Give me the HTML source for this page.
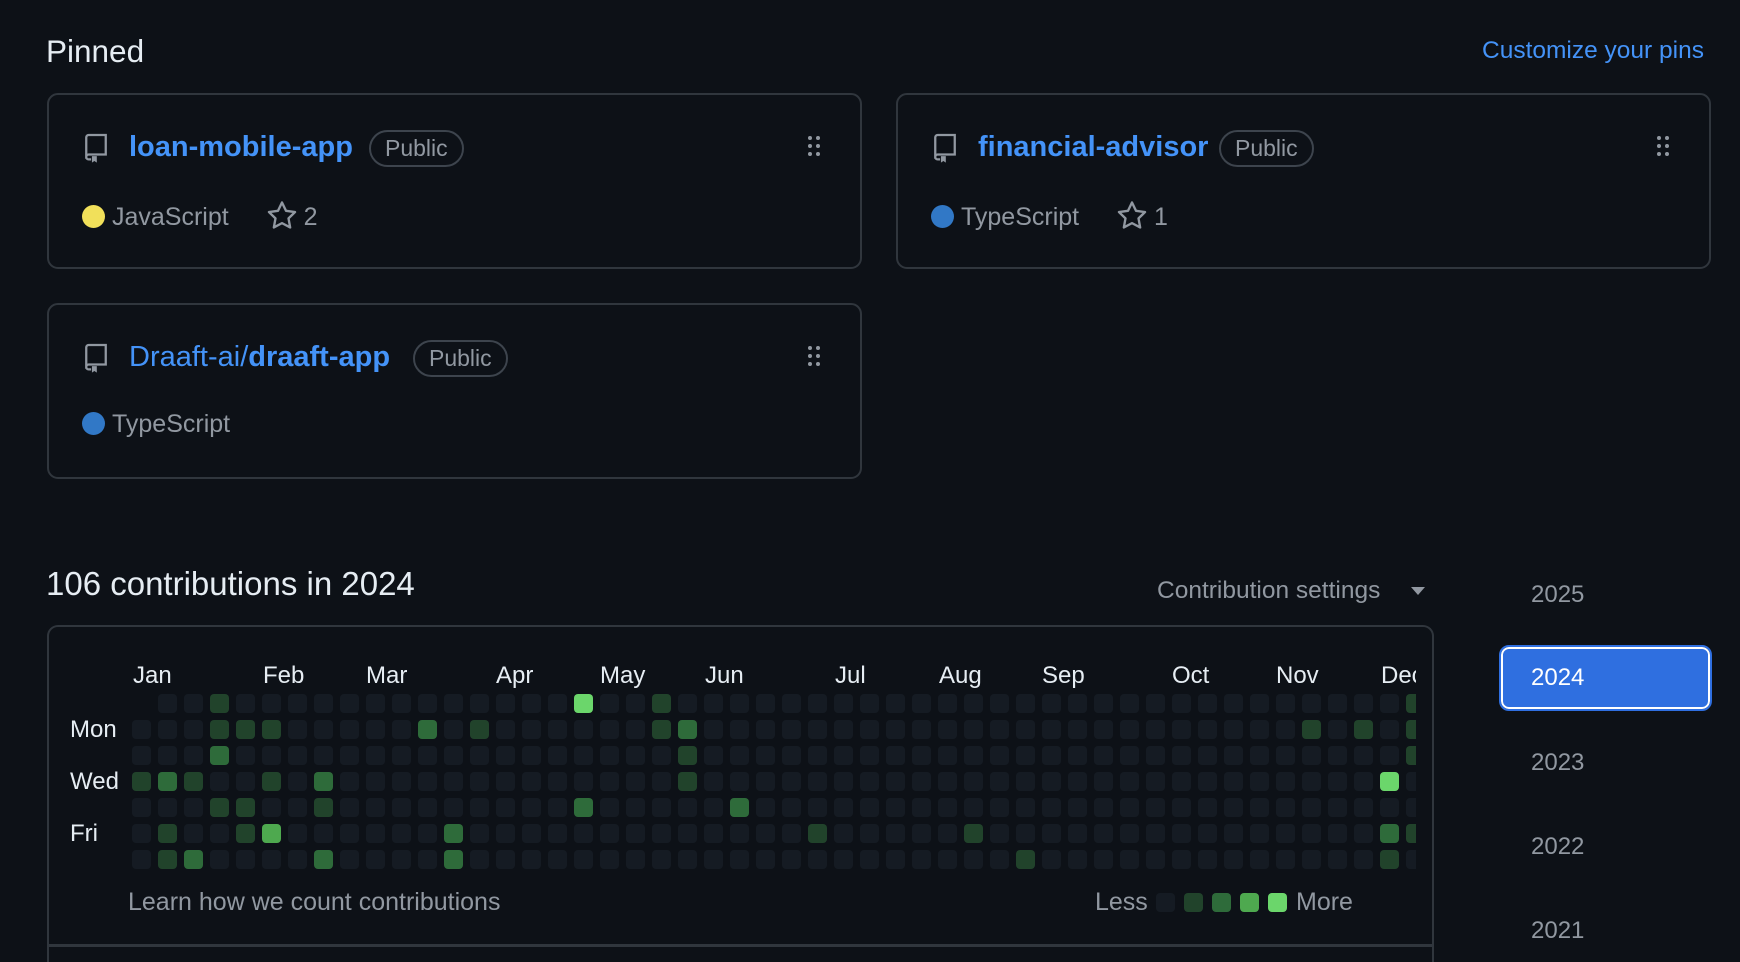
<!DOCTYPE html>
<html><head><meta charset="utf-8"><style>
*{margin:0;padding:0;box-sizing:border-box}
html,body{width:1740px;height:962px;overflow:hidden}
body{background:#0d1117;font-family:"Liberation Sans",sans-serif;color:#e6edf3;position:relative}
.a{position:absolute;white-space:nowrap}
.card{position:absolute;border:2px solid #30363d;border-radius:11px;width:815px;height:176px}
.name{position:absolute;left:80px;top:36px;font-size:29px;font-weight:bold;color:#4493f8;white-space:nowrap}
.name span{font-weight:normal}
.badge{position:absolute;top:35px;height:37px;border:2px solid #3d444d;border-radius:19px;font-size:23px;color:#9198a1;padding:0 14px;line-height:33px}
.repo{position:absolute;left:34px;top:38px}
.dots{position:absolute;left:758px;top:40px}
.lang{position:absolute;left:33px;top:106px;font-size:25px;color:#9198a1;line-height:26px;white-space:nowrap}
.lang i{display:inline-block;width:23px;height:23px;border-radius:50%;vertical-align:-3px;margin-right:7px}
#grid{position:absolute;left:132px;top:694px;width:1284px;height:180px;overflow:hidden}
.c{position:absolute;width:19px;height:19px;border-radius:4px;background:#151b23}
.m{position:absolute;top:662px;font-size:24px;color:#e6edf3}
.d{position:absolute;left:70px;font-size:24px}
.yr{position:absolute;left:1531px;font-size:24px;color:#9198a1}
</style></head><body>
<div class="a" style="left:46px;top:33px;font-size:31.5px">Pinned</div>
<div class="a" style="left:1482px;top:37px;font-size:24.5px;color:#4493f8">Customize your pins</div>

<div class="card" style="left:47px;top:93px">
<svg class="repo" width="26" height="30" viewBox="0 0 16 18"><path d="M2 15.5V2.5A1.5 1.5 0 0 1 3.5 1H14v12H3.5A1.5 1.5 0 0 0 2 14.5 1.5 1.5 0 0 0 3.5 16H5" fill="none" stroke="#9198a1" stroke-width="1.4"/><path d="M5.5 14h3v4l-1.5-1-1.5 1z" fill="#9198a1"/></svg>
<div class="name">loan-mobile-app</div>
<div class="badge" style="left:320px">Public</div>
<svg class="dots" width="14" height="22"><g fill="#9198a1"><circle cx="3" cy="3" r="2"/><circle cx="11" cy="3" r="2"/><circle cx="3" cy="11" r="2"/><circle cx="11" cy="11" r="2"/><circle cx="3" cy="19" r="2"/><circle cx="11" cy="19" r="2"/></g></svg>
<div class="lang"><i style="background:#f1e05a"></i>JavaScript<svg style="margin-left:38px;vertical-align:-5px" width="30" height="29" viewBox="0 0 16 16"><path d="M8 .8l2.2 4.6 5 .7-3.6 3.5.9 5L8 12.2l-4.5 2.4.9-5L.8 6.1l5-.7z" fill="none" stroke="#9198a1" stroke-width="1.3" stroke-linejoin="round"/></svg> 2</div>
</div>

<div class="card" style="left:896px;top:93px">
<svg class="repo" width="26" height="30" viewBox="0 0 16 18"><path d="M2 15.5V2.5A1.5 1.5 0 0 1 3.5 1H14v12H3.5A1.5 1.5 0 0 0 2 14.5 1.5 1.5 0 0 0 3.5 16H5" fill="none" stroke="#9198a1" stroke-width="1.4"/><path d="M5.5 14h3v4l-1.5-1-1.5 1z" fill="#9198a1"/></svg>
<div class="name">financial-advisor</div>
<div class="badge" style="left:321px">Public</div>
<svg class="dots" width="14" height="22"><g fill="#9198a1"><circle cx="3" cy="3" r="2"/><circle cx="11" cy="3" r="2"/><circle cx="3" cy="11" r="2"/><circle cx="11" cy="11" r="2"/><circle cx="3" cy="19" r="2"/><circle cx="11" cy="19" r="2"/></g></svg>
<div class="lang"><i style="background:#3178c6"></i>TypeScript<svg style="margin-left:38px;vertical-align:-5px" width="30" height="29" viewBox="0 0 16 16"><path d="M8 .8l2.2 4.6 5 .7-3.6 3.5.9 5L8 12.2l-4.5 2.4.9-5L.8 6.1l5-.7z" fill="none" stroke="#9198a1" stroke-width="1.3" stroke-linejoin="round"/></svg> 1</div>
</div>

<div class="card" style="left:47px;top:303px">
<svg class="repo" width="26" height="30" viewBox="0 0 16 18"><path d="M2 15.5V2.5A1.5 1.5 0 0 1 3.5 1H14v12H3.5A1.5 1.5 0 0 0 2 14.5 1.5 1.5 0 0 0 3.5 16H5" fill="none" stroke="#9198a1" stroke-width="1.4"/><path d="M5.5 14h3v4l-1.5-1-1.5 1z" fill="#9198a1"/></svg>
<div class="name"><span>Draaft-ai/</span>draaft-app</div>
<div class="badge" style="left:364px">Public</div>
<svg class="dots" width="14" height="22"><g fill="#9198a1"><circle cx="3" cy="3" r="2"/><circle cx="11" cy="3" r="2"/><circle cx="3" cy="11" r="2"/><circle cx="11" cy="11" r="2"/><circle cx="3" cy="19" r="2"/><circle cx="11" cy="19" r="2"/></g></svg>
<div class="lang"><i style="background:#3178c6"></i>TypeScript</div>
</div>

<div class="a" style="left:46px;top:565px;font-size:33px">106 contributions in 2024</div>
<div class="a" style="left:1157px;top:577px;font-size:24.5px;color:#9198a1">Contribution settings</div>
<svg class="a" style="left:1410px;top:586px" width="16" height="10"><path d="M1 1h14L8 9z" fill="#9198a1"/></svg>

<div style="position:absolute;left:47px;top:625px;width:1387px;height:337px;border:2px solid #30363d;border-bottom:none;border-radius:11px 11px 0 0"></div>
<div style="position:absolute;left:49px;top:944px;width:1383px;height:3px;background:#30363d"></div>

<div class="m" style="left:133px">Jan</div><div class="m" style="left:263px">Feb</div><div class="m" style="left:366px">Mar</div><div class="m" style="left:496px">Apr</div><div class="m" style="left:600px">May</div><div class="m" style="left:705px">Jun</div><div class="m" style="left:835px">Jul</div><div class="m" style="left:939px">Aug</div><div class="m" style="left:1042px">Sep</div><div class="m" style="left:1172px">Oct</div><div class="m" style="left:1276px">Nov</div>
<div style="position:absolute;left:1381px;top:662px;width:35px;overflow:hidden;font-size:24px">Dec</div>
<div class="d" style="top:716px">Mon</div><div class="d" style="top:768px">Wed</div><div class="d" style="top:820px">Fri</div>
<div id="grid"></div>
<div class="a" style="left:128px;top:888px;font-size:25px;color:#9198a1">Learn how we count contributions</div>
<div class="a" style="left:1095px;top:888px;font-size:25px;color:#9198a1">Less</div>
<div class="a" style="left:1296px;top:888px;font-size:25px;color:#9198a1">More</div>
<div class="c" style="left:1156px;top:893px"></div>
<div class="c" style="left:1184px;top:893px;background:#21432b"></div>
<div class="c" style="left:1212px;top:893px;background:#2e6b3a"></div>
<div class="c" style="left:1240px;top:893px;background:#4ea94f"></div>
<div class="c" style="left:1268px;top:893px;background:#6bd66b"></div>

<div class="yr" style="top:581px">2025</div>
<div style="position:absolute;left:1501px;top:647px;width:209px;height:62px;background:#2f6fe0;border:2px solid #fff;outline:2px solid #2f6fe0;border-radius:8px;color:#fff;font-size:24px;padding:15px 0 0 28px">2024</div>
<div class="yr" style="top:749px">2023</div>
<div class="yr" style="top:833px">2022</div>
<div class="yr" style="top:917px">2021</div>
<script>
var L=['#151b23','#21432b','#2e6b3a','#4ea94f','#6bd66b'];
var data={"0,3":1,"0,17":4,"0,20":1,"0,49":1,"1,3":1,"1,4":1,"1,5":1,"1,11":2,"1,13":1,"1,20":1,"1,21":2,"1,45":1,"1,47":1,"1,49":1,"2,3":2,"2,21":1,"2,49":1,"3,0":1,"3,1":2,"3,2":1,"3,5":1,"3,7":2,"3,21":1,"3,48":4,"4,3":1,"4,4":1,"4,7":1,"4,17":2,"4,23":2,"5,1":1,"5,4":1,"5,5":3,"5,12":2,"5,26":1,"5,32":1,"5,48":2,"5,49":1,"6,1":1,"6,2":2,"6,7":2,"6,12":2,"6,34":1,"6,48":1};
var g=document.getElementById('grid'),h='';
for(var c=0;c<53;c++)for(var r=0;r<7;r++){if(c==0&&r==0)continue;var v=data[r+','+c]||0;
h+='<div class="c" style="left:'+(c*26)+'px;top:'+(r*26)+'px;background:'+L[v]+'"></div>';}
g.innerHTML=h;
</script>
</body></html>
